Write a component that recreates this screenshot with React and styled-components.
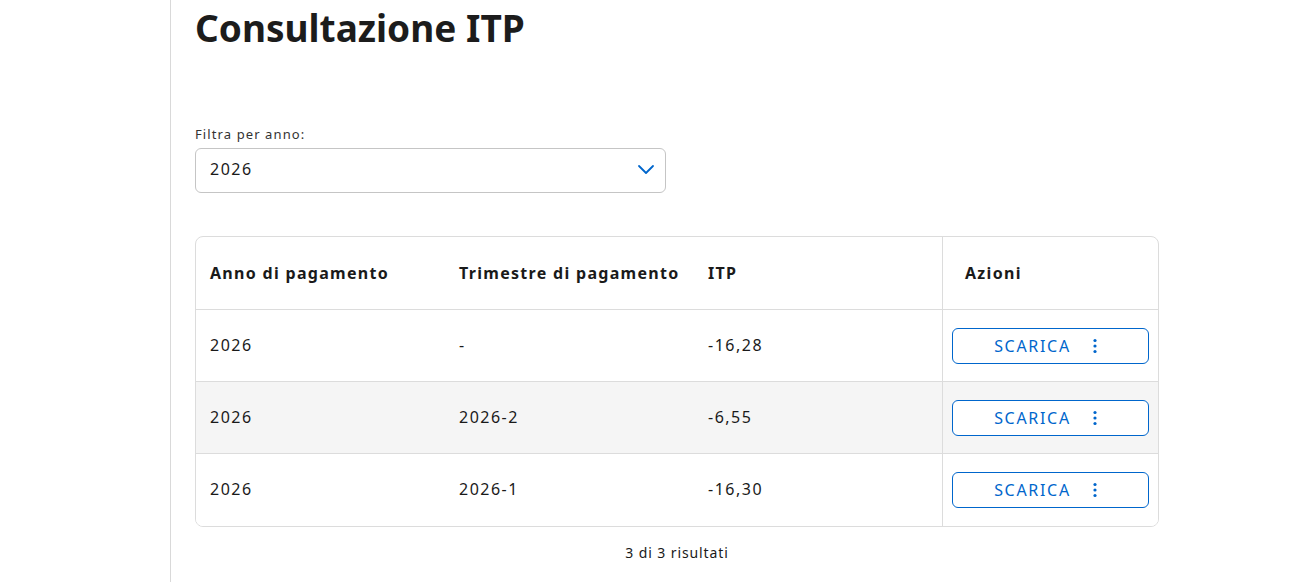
import React from 'react'
import styled, { createGlobalStyle } from 'styled-components'

const GlobalStyle = createGlobalStyle`
    html, body { margin:0; padding:0; background:#fff; }
    body { font-family: "Noto Sans", "Liberation Sans", sans-serif; color:#1a1a1a; }
`;

const rows = [
    { anno: '2026', trimestre: '-', itp: '-16,28' },
    { anno: '2026', trimestre: '2026-2', itp: '-6,55' },
    { anno: '2026', trimestre: '2026-1', itp: '-16,30' },
];

function KebabIcon() {
    return (
        <svg width="4" height="16" viewBox="0 0 4 16">
            <circle cx="2" cy="2.5" r="1.6" fill="currentColor" />
            <circle cx="2" cy="8" r="1.6" fill="currentColor" />
            <circle cx="2" cy="13.5" r="1.6" fill="currentColor" />
        </svg>
    )
}

function Chevron() {
    return (
        <svg width="18" height="12" viewBox="0 0 18 12">
            <path d="M2 3 L9 10 L16 3" fill="none" stroke="#0066cc" strokeWidth="1.8" strokeLinecap="round" strokeLinejoin="round" />
        </svg>
    )
}

export default function App() {
    return (
        <>
            <GlobalStyle />
            <Page>
                <SideRail />
                <Main>
                    <Title>Consultazione ITP</Title>
                    <FilterBlock>
                        <Label>Filtra per anno:</Label>
                        <Select>
                            <span>2026</span>
                            <Chevron />
                        </Select>
                    </FilterBlock>
                    <Table>
                        <HeadCell>Anno di pagamento</HeadCell>
                        <HeadCell>Trimestre di pagamento</HeadCell>
                        <HeadCell>ITP</HeadCell>
                        <HeadCell $action>Azioni</HeadCell>
                        {rows.map((r, i) => (
                            <React.Fragment key={i}>
                                <Cell $alt={i === 1} $last={i === rows.length - 1}>{r.anno}</Cell>
                                <Cell $alt={i === 1} $last={i === rows.length - 1}>{r.trimestre}</Cell>
                                <Cell $alt={i === 1} $last={i === rows.length - 1}>{r.itp}</Cell>
                                <Cell $alt={i === 1} $action $last={i === rows.length - 1}>
                                    <ActionButton>
                                        <span>SCARICA</span>
                                        <KebabIcon />
                                    </ActionButton>
                                </Cell>
                            </React.Fragment>
                        ))}
                    </Table>
                    <Footer>3 di 3 risultati</Footer>
                </Main>
            </Page>
        </>
    )
}

const Page = styled.div`
    display:flex;
    height:582px;
    overflow:hidden;
`;

const SideRail = styled.div`
    width:170px;
    flex-shrink:0;
    border-right:1px solid #d9d9d9;
`;

const Main = styled.div`
    padding-left:24px;
    width:964px;
    display:flex;
    flex-direction:column;
`;

const Title = styled.h1`
    margin:4px 0 0;
    font-size:37px;
    line-height:48px;
    font-weight:700;
    color:#1c1c1c;
    letter-spacing:0;
`;

const FilterBlock = styled.div`
    margin-top:73px;
    display:flex;
    flex-direction:column;
    gap:5px;
`;

const Label = styled.label`
    font-size:13px;
    line-height:18px;
    letter-spacing:1.1px;
    color:#333;
`;

const Select = styled.div`
    display:flex;
    align-items:center;
    justify-content:space-between;
    padding:0 10px 3px 14px;
    box-sizing:border-box;
    width:471px;
    height:45px;
    border:1px solid #c5c5c5;
    border-radius:6px;
    font-size:16px;
    letter-spacing:1.5px;
`;

const Table = styled.div`
    margin-top:43px;
    display:grid;
    grid-template-columns:249px 249px 248px 1fr;
    grid-template-rows:73px repeat(3, 72px);
    border:1px solid #dcdcdc;
    border-radius:8px;
    overflow:hidden;
    width:964px;
    box-sizing:border-box;
`;

const HeadCell = styled.div`
    display:flex;
    align-items:center;
    padding-left:${p => p.$action ? '22px' : '14px'};
    font-weight:700;
    font-size:16px;
    letter-spacing:1.3px;
    border-bottom:1px solid #dcdcdc;
    border-left:${p => p.$action ? '1px solid #dcdcdc' : 'none'};
    box-sizing:border-box;
`;

const Cell = styled.div`
    display:flex;
    align-items:center;
    padding-left:${p => p.$action ? '9px' : '14px'};
    padding-right:${p => p.$action ? '9px' : '0'};
    padding-bottom:${p => p.$action ? '0' : '2px'};
    font-size:16px;
    letter-spacing:1.5px;
    background:${p => p.$alt ? '#f5f5f5' : '#fff'};
    border-bottom:${p => p.$last ? 'none' : '1px solid #dcdcdc'};
    border-left:${p => p.$action ? '1px solid #dcdcdc' : 'none'};
    box-sizing:border-box;
`;

const ActionButton = styled.button`
    width:197px;
    height:36px;
    border:1px solid #0066cc;
    border-radius:6px;
    background:#fff;
    color:#0066cc;
    display:flex;
    align-items:center;
    justify-content:center;
    gap:22px;
    padding:0 10px 0 0;
    font-family:inherit;
    font-size:16px;
    letter-spacing:1.7px;
    cursor:pointer;
`;

const Footer = styled.div`
    margin-top:16px;
    text-align:center;
    font-size:14px;
    letter-spacing:0.9px;
    color:#1a1a1a;
`;
